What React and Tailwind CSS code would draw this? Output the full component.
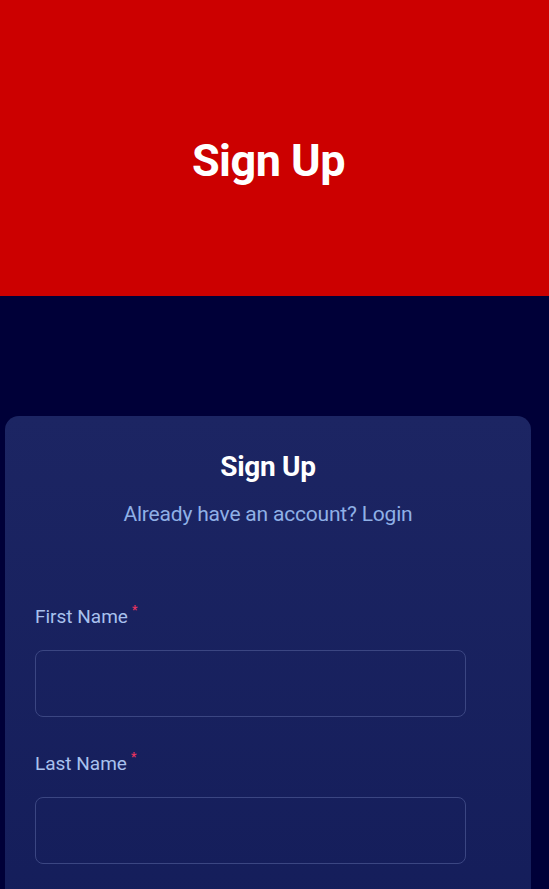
const Field = ({ label }) => (
  <div className="flex flex-col">
    <label className="text-[19px] leading-[24px] text-[#a9c1ee] flex items-start">
      {label}
      <span className="text-[#e8345f] text-[12px] leading-[12px] ml-[4px] -mt-[1px] font-bold">*</span>
    </label>
    <input
      type="text"
      className="mt-[21px] w-[431px] h-[67px] rounded-[8px] border border-[#3b4682] bg-transparent outline-none"
    />
  </div>
);

const App = () => {
  return (
    <div className="min-h-screen bg-[#000038] font-['Roboto',sans-serif] overflow-hidden">
      <div className="h-[296px] bg-[#cc0000] flex items-center justify-center pr-[12px]">
        <h1 className="text-[45px] font-bold text-white tracking-[-0.5px] pt-[26px]">Sign Up</h1>
      </div>
      <div className="pt-[120px]">
        <div className="ml-[5px] w-[526px] rounded-[14px] bg-gradient-to-b from-[#1c2563] to-[#141d5a] pt-[34px] px-[30px] pb-[40px] min-h-[520px]">
          <h2 className="text-center text-[28px] leading-[34px] font-bold text-white tracking-[-0.3px]">Sign Up</h2>
          <p className="text-center mt-[17px] text-[21px] leading-[26px] text-[#8fb0e6] tracking-[-0.2px]">
            Already have an account? Login
          </p>
          <div className="mt-[78px] flex flex-col gap-[35px]">
            <Field label="First Name" />
            <Field label="Last Name" />
          </div>
        </div>
      </div>
    </div>
  );
};

export default App;
